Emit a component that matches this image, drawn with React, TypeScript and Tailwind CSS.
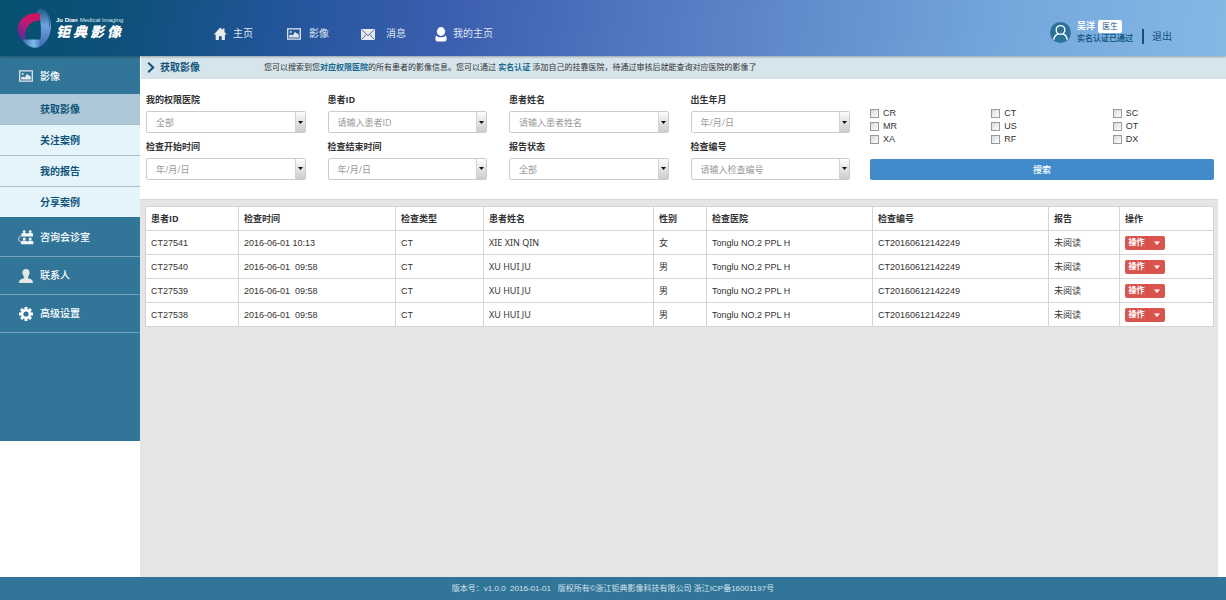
import type { ReactNode } from 'react';
import clsx from 'clsx';

interface FieldConfig {
  id: string;
  label: string;
  placeholder: string;
  type: 'select' | 'input';
}

interface ImageRecord {
  patientId: string;
  time: string;
  modality: string;
  name: string;
  gender: string;
  hospital: string;
  studyNo: string;
  report: string;
}

const FIELDS: FieldConfig[] = [
  { id: 'hospital', label: '我的权限医院', placeholder: '全部', type: 'select' },
  { id: 'patient-id', label: '患者ID', placeholder: '请输入患者ID', type: 'input' },
  { id: 'patient-name', label: '患者姓名', placeholder: '请输入患者姓名', type: 'input' },
  { id: 'birthday', label: '出生年月', placeholder: '年/月/日', type: 'input' },
  { id: 'start', label: '检查开始时间', placeholder: '年/月/日', type: 'input' },
  { id: 'end', label: '检查结束时间', placeholder: '年/月/日', type: 'input' },
  { id: 'report', label: '报告状态', placeholder: '全部', type: 'select' },
  { id: 'study-no', label: '检查编号', placeholder: '请输入检查编号', type: 'input' },
];

const MODALITIES = ['CR', 'CT', 'SC', 'MR', 'US', 'OT', 'XA', 'RF', 'DX'];

const COLUMNS = [
  { title: '患者ID', width: 'w-[93px]' },
  { title: '检查时间', width: 'w-[157px]' },
  { title: '检查类型', width: 'w-[88px]' },
  { title: '患者姓名', width: 'w-[170px]' },
  { title: '性别', width: 'w-[53px]' },
  { title: '检查医院', width: 'w-[166px]' },
  { title: '检查编号', width: 'w-[176px]' },
  { title: '报告', width: 'w-[71px]' },
  { title: '操作', width: 'w-[94px]' },
];

const makeRecord = (patientId: string, time: string, name: string, gender: string): ImageRecord => ({
  patientId,
  time,
  modality: 'CT',
  name,
  gender,
  hospital: 'Tonglu NO.2 PPL H',
  studyNo: 'CT20160612142249',
  report: '未阅读',
});

const RECORDS: ImageRecord[] = [
  makeRecord('CT27541', '2016-06-01 10:13', 'XIE XIN QIN', '女'),
  makeRecord('CT27540', '2016-06-01  09:58', 'XU HUI JU', '男'),
  makeRecord('CT27539', '2016-06-01  09:58', 'XU HUI JU', '男'),
  makeRecord('CT27538', '2016-06-01  09:58', 'XU HUI JU', '男'),
];

const SUB_MENU = ['获取影像', '关注案例', '我的报告', '分享案例'];

/* ---------- icons ---------- */

const HomeIcon = () => (
  <svg width="14" height="14" viewBox="0 0 14 14" fill="#e9eaec">
    <path d="M7.300.6.8 7.400h1.900V13h3.200V9.200h2.800V13h3.200V7.400h1.900L11.500 5V1.600H9.600v1.500z" />
  </svg>
);

const PictureIcon = () => (
  <svg width="14" height="12" viewBox="0 0 14 12">
    <path d="M.7.9h12.600v10.200H.7z" fill="none" stroke="#e3e8ee" strokeWidth="1.300" />
    <circle cx="3.700" cy="4" r="1" fill="#e3e8ee" />
    <path d="M2.200 9.400V7.600l1.900-1.200 1.600 1 2.400-3.600 1.500 1.800h1.300l.9 1.600v2.200z" fill="#e3e8ee" />
  </svg>
);

const MailIcon = () => (
  <svg width="14" height="11" viewBox="0 0 14 11">
    <rect width="14" height="11" rx="0.8" fill="#e9eaec" />
    <path d="M.6.6 7 6.600 13.400.6M.6 10.400l4.600-5M13.400 10.400l-4.600-5" fill="none" stroke="#3c5da9" strokeWidth="0.9" />
  </svg>
);

const UserIcon = () => (
  <svg width="12" height="15" viewBox="0 0 12 15" fill="#fff">
    <ellipse cx="6" cy="4.500" rx="4.100" ry="4.400" />
    <path d="M1.600 8.400C2.600 9.800 4.200 10.300 6 10.300s3.400-.5 4.400-1.900c.9.7 1.200 1.700 1.200 3.100 0 2.100-.8 3.100-2.600 3.100H3c-1.800 0-2.600-1-2.600-3.100 0-1.400.3-2.400 1.200-3.100z" />
  </svg>
);

const ConsultIcon = () => (
  <svg width="16" height="15" viewBox="0 0 16 15" fill="#f1f5f7">
    <circle cx="6.200" cy="1.700" r="1.400" />
    <circle cx="12.200" cy="1.700" r="1.400" />
    <path d="M3.400 6.400V4.400c0-.9.5-1.400 1.300-1.400h2.900c.8 0 1.200.4 1.600 1 .4-.6.8-1 1.600-1h2.900c.8 0 1.300.5 1.300 1.400v2z" />
    <circle cx="6.200" cy="9" r="1.500" />
    <circle cx="12.200" cy="9" r="1.500" />
    <path d="M3 14.300v-2c0-1 .6-1.600 1.400-1.600h3.300c.8 0 1.200.4 1.500 1 .4-.6.8-1 1.500-1H14c.8 0 1.400.6 1.400 1.600v2z" />
    <path d="M3.400 5.800C1.400 6.300.6 7.500.6 9s.9 2.700 2.600 3.300" fill="none" stroke="#f1f5f7" strokeWidth="0.8" />
  </svg>
);

const ContactIcon = () => (
  <svg width="14" height="14" viewBox="0 0 14 14" fill="#e6e6e4">
    <path d="M7 0c2.400 0 3.700 1.600 3.600 3.600-.1 1.900-.8 3.500-1.700 4.300v1.200c.6.8 4.600 1 4.900 3.300L14 14H0l.2-1.600C.5 10.100 4.500 9.900 5.100 9.100V7.900c-.9-.8-1.600-2.400-1.700-4.300C3.300 1.600 4.600 0 7 0z" />
  </svg>
);

const GearIcon = () => (
  <svg width="14" height="14" viewBox="-7 -7 14 14" fill="#fff">
    {[0, 45, 90, 135].map((deg) => (
      <rect key={deg} x="-1.500" y="-7" width="3" height="14" rx="0.5" transform={`rotate(${deg})`} />
    ))}
    <circle r="5" />
    <circle r="2.600" fill="#317599" />
  </svg>
);

const AvatarIcon = () => (
  <svg width="21" height="21" viewBox="0 0 21 21">
    <circle cx="10.500" cy="10.500" r="10.500" fill="#2b7299" />
    <circle cx="10.500" cy="7.900" r="4.300" fill="none" stroke="#fff" strokeWidth="1.400" />
    <path d="M3.900 17.200c.5-2.900 2.200-4.700 4.300-5.300M17.100 17.200c-.5-2.900-2.200-4.700-4.300-5.300" fill="none" stroke="#fff" strokeWidth="1.400" strokeLinecap="round" />
  </svg>
);

const LogoMark = () => (
  <svg width="35" height="42" viewBox="0 0 35 42">
    <defs>
      <linearGradient id="logoPink" x1="0.800" y1="0" x2="0.200" y2="1">
        <stop offset="0%" stopColor="#d8125c" />
        <stop offset="50%" stopColor="#b81a74" />
        <stop offset="100%" stopColor="#54309a" />
      </linearGradient>
      <linearGradient id="logoBlue" x1="0" y1="0" x2="0" y2="1">
        <stop offset="0%" stopColor="#1c5688" />
        <stop offset="45%" stopColor="#6ea2dc" />
        <stop offset="100%" stopColor="#3f69b4" />
      </linearGradient>
      <linearGradient id="logoBase" x1="0" y1="0" x2="1" y2="0">
        <stop offset="0%" stopColor="#3c62b0" />
        <stop offset="60%" stopColor="#79bce8" />
        <stop offset="100%" stopColor="#4a7cc4" />
      </linearGradient>
    </defs>
    {/* left ribbon */}
    <path d="M23.500 6.500C12 4.800 1.500 11 .6 21.500c-.3 5.500 2.200 9.500 5.600 11.500l2.600-.4C7.100 23.500 11 13.500 23.800 13.200z" fill="url(#logoPink)" />
    {/* right ribbon */}
    <path d="M22 .8c7.500 2 11.800 8.500 12 17.200.2 10-4.400 18.500-12.200 22.300 2.400-8 2.800-17.800 1.400-27.600L23 6.800c-1-.6-2.500-.8-3.400-.7z" fill="url(#logoBlue)" />
    <path d="M26.500 2c4.600 4.400 6.600 10 6 17.500" fill="none" stroke="#2b5f9e" strokeWidth="0.9" />
    {/* bottom ribbon */}
    <path d="M5.200 32.600h18.700c-.5 3-1.200 5.400-2.100 7.700C14.500 41.800 8.600 38.500 5.200 32.600z" fill="url(#logoBase)" />
  </svg>
);

/* ---------- header ---------- */

const NAV_ITEMS = [
  { label: '主页', icon: <HomeIcon />, gap: 'gap-[6px]' },
  { label: '影像', icon: <PictureIcon />, gap: 'gap-[8px]' },
  { label: '消息', icon: <MailIcon />, gap: 'gap-[11px]' },
  { label: '我的主页', icon: <UserIcon />, gap: 'gap-[6px]' },
];

const Header = () => (
  <header className="relative z-10 flex h-14 items-center bg-[linear-gradient(100deg,#05506f_0%,#0d5079_10%,#23559a_23%,#3a5eae_36%,#5b84c8_60%,#76a8dd_83%,#84b9e4_100%)] shadow-[0_1px_2px_rgba(0,0,0,0.3)]">
    <div className="flex w-[213px] shrink-0 items-center gap-[4px] pl-[17px]">
      <LogoMark />
      <div className="text-white">
        <p className="text-[6px] leading-[8px] whitespace-nowrap">
          <b>Ju Dian</b>
          <span className="ml-[2px] text-[#dbe6ee]">Medical Imaging</span>
        </p>
        <p className="flex gap-[3px] text-[14px] leading-[16px] font-black italic">
          {[...'钜典影像'].map((char) => (
            <span key={char}>{char}</span>
          ))}
        </p>
      </div>
    </div>
    <nav className="flex pt-[12px] text-[10px] leading-4 text-[#dfe6f2]">
      {NAV_ITEMS.map(({ label, icon, gap }) => (
        <a key={label} href="#" className={clsx('flex w-[74px] items-center whitespace-nowrap', gap)}>
          {icon}
          {label}
        </a>
      ))}
    </nav>
    <div className="ml-auto flex items-center pt-[8px] pr-[54px]">
      <AvatarIcon />
      <div className="ml-[6px] text-[#175b85]">
        <div className="flex items-center gap-[3px]">
          <span className="text-[9px] leading-[13px] font-bold text-white">吴洋</span>
          <span className="rounded-[2px] bg-white px-[4px] text-[8px] leading-[13px]">医生</span>
        </div>
        <p className="text-[8px] leading-[11px] font-bold">实名认证已通过</p>
      </div>
      <a href="#" className="mt-[8px] ml-[9px] border-l-2 border-[#0f537c] pl-[8px] text-[10px] leading-[15px] text-[#12507a]">
        退出
      </a>
    </div>
  </header>
);

/* ---------- sidebar ---------- */

const MenuItem = ({ icon, label, className }: { icon: ReactNode; label: string; className?: string }) => (
  <a href="#" className={clsx('flex items-center pl-[18px] text-white', className)}>
    <span className="flex w-[22px] shrink-0 justify-start">
      <span className="flex w-4 justify-center">{icon}</span>
    </span>
    {label}
  </a>
);

const Sidebar = () => (
  <aside className="w-[140px] shrink-0 self-start bg-[#317599] pb-[108px] text-[10px] font-medium">
    <MenuItem icon={<PictureIcon />} label="影像" className="h-[38px] pt-[2px]" />
    <ul className="divide-y divide-[#a5c0cf]">
      {SUB_MENU.map((item, index) => (
        <li key={item} className={index === 0 ? 'bg-[#aec8d7]' : 'bg-[#e5f3fb]'}>
          <a href="#" className="flex h-[30px] items-center pl-10 font-bold text-[#0f5478]">
            {item}
          </a>
        </li>
      ))}
    </ul>
    <MenuItem icon={<ConsultIcon />} label="咨询会诊室" className="h-10 border-b border-[#73a2ba] pt-[2px]" />
    <MenuItem icon={<ContactIcon />} label="联系人" className="h-[38px] border-b border-[#73a2ba]" />
    <MenuItem icon={<GearIcon />} label="高级设置" className="h-[38px] border-b border-[#73a2ba]" />
  </aside>
);

/* ---------- search form ---------- */

const Caret = () => (
  <svg width="5" height="3" viewBox="0 0 5 3" fill="#111">
    <path d="M0 0h5L2.500 3z" />
  </svg>
);

const arrowClass =
  'flex w-[10px] items-center justify-center border-l border-[#d3d3d3] bg-linear-to-b from-[#fdfdfd] to-[#cccccc]';

const Field = ({ id, label, placeholder, type }: FieldConfig) => (
  <div>
    <label htmlFor={id} className="block text-[9px] leading-4 font-bold text-[#333]">
      {label}
    </label>
    <div className="relative mt-[3px] flex h-[22px] rounded-[2px] border border-[#ccc] bg-white">
      {type === 'select' ? (
        <>
          <select id={id} className="w-full appearance-none bg-transparent pt-[2px] pl-[9px] text-[9px] text-[#999]">
            <option>{placeholder}</option>
          </select>
          <span className={clsx(arrowClass, 'pointer-events-none absolute inset-y-0 right-0')}>
            <Caret />
          </span>
        </>
      ) : (
        <>
          <input id={id} placeholder={placeholder} className="w-full min-w-0 pt-[2px] pl-[9px] text-[9px] placeholder:text-[#999]" />
          <button type="button" aria-label={label} className={clsx(arrowClass, 'shrink-0')}>
            <Caret />
          </button>
        </>
      )}
    </div>
  </div>
);

const SearchForm = () => (
  <form className="grid grid-cols-[704fr_344fr] gap-5 border-b border-[#d8d8d8] bg-white pt-[13px] pr-[4px] pb-[19px] pl-[6px]">
    <div className="grid grid-cols-4 gap-x-[22px] gap-y-[5px] font-['Open_Sans','Noto_Sans_CJK_SC',sans-serif]">
      {FIELDS.map((field) => (
        <Field key={field.id} {...field} />
      ))}
    </div>
    <div className="pt-[15px]">
      <div className="grid grid-cols-3 gap-x-5">
        {MODALITIES.map((name) => (
          <label key={name} className="flex h-[13px] items-center gap-1 text-[9px] text-[#333]">
            <input
              type="checkbox"
              className="size-[9px] appearance-none border border-[#999] bg-linear-to-br from-[#d5d9dc] to-white checked:bg-[#428bca]"
            />
            {name}
          </label>
        ))}
      </div>
      <button type="button" className="mt-[13px] h-[21px] w-full rounded-[2px] bg-[#428bca] pt-[2px] text-[9px] font-medium text-white">
        搜索
      </button>
    </div>
  </form>
);

/* ---------- result table ---------- */

const ActionButtons = () => (
  <div className="flex h-[14px] w-10 overflow-hidden rounded-[2px] bg-[#d9534f] text-[8px] font-bold text-white">
    <button type="button" className="w-[22px] pl-[1px] leading-[14px]">操作</button>
    <button type="button" aria-label="更多操作" className="flex flex-1 items-center justify-center border-l border-[#cf4b47]">
      <svg width="6" height="4" viewBox="0 0 6 4" fill="#fff">
        <path d="M0 .4h6L3 4z" />
      </svg>
    </button>
  </div>
);

const ResultTable = () => (
  <table className="w-full table-fixed border-collapse bg-white text-left text-[9px] leading-3 text-[#333] [&_td]:border [&_td]:border-[#d5d5d5] [&_td]:py-0 [&_td]:pl-[5px] [&_th]:border [&_th]:border-[#d5d5d5] [&_th]:pl-[5px]">
    <thead>
      <tr className="h-6 font-['Open_Sans','Noto_Sans_CJK_SC',sans-serif]">
        {COLUMNS.map(({ title, width }) => (
          <th key={title} className={width}>
            {title}
          </th>
        ))}
      </tr>
    </thead>
    <tbody>
      {RECORDS.map((record) => (
        <tr key={record.patientId} className="h-6 whitespace-pre">
          <td>{record.patientId}</td>
          <td>{record.time}</td>
          <td>{record.modality}</td>
          <td className="font-['Noto_Sans',sans-serif]">{record.name}</td>
          <td>{record.gender}</td>
          <td>{record.hospital}</td>
          <td>{record.studyNo}</td>
          <td>{record.report}</td>
          <td>
            <ActionButtons />
          </td>
        </tr>
      ))}
    </tbody>
  </table>
);

export default function App() {
  return (
    <div className="flex min-h-screen flex-col bg-white font-['Liberation_Sans','Noto_Sans_CJK_SC',sans-serif]">
      <Header />
      <div className="flex flex-1">
        <Sidebar />
        <main className="flex min-w-0 flex-1 flex-col">
          <div className="flex h-[23px] items-center border-l border-white bg-[#d6e4eb]">
            <h1 className="flex w-[123px] shrink-0 items-center gap-[5px] pl-[6px] text-[10px] font-bold text-[#0f5478]">
              <svg width="8" height="11" viewBox="0 0 8 11" fill="none" stroke="#0f5478" strokeWidth="2">
                <path d="M1.200.8 6.200 5.500 1.200 10.200" />
              </svg>
              获取影像
            </h1>
            <p className="text-[8px] whitespace-nowrap text-[#333]">
              您可以搜索到您<b className="text-[#14678f]">对应权限医院</b>的所有患者的影像信息。您可以通过{' '}
              <a href="#" className="font-bold text-[#14678f]">实名认证</a>{' '}
              添加自己的挂靠医院，待通过审核后就能查询对应医院的影像了
            </p>
          </div>
          <div className="mr-2 flex flex-1 flex-col bg-[#e5e5e5]">
            <SearchForm />
            <div className="px-[5px] pt-[6px]">
              <ResultTable />
            </div>
          </div>
        </main>
      </div>
      <footer className="h-[23px] bg-[#317599] text-center text-[8px] leading-[23px] whitespace-pre text-[#d6e4ec]">
        版本号：v1.0.0  2016-01-01   版权所有©浙江钜典影像科技有限公司 浙江ICP备16001197号
      </footer>
    </div>
  );
}
